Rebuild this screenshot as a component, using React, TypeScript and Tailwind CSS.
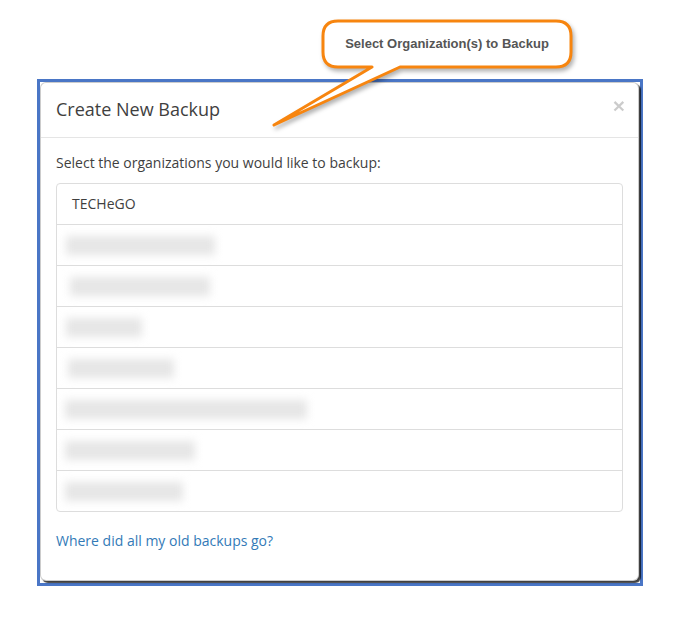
import React from "react";

const blurred = [
  { w: 149, ml: -6 },
  { w: 140, ml: -2 },
  { w: 76, ml: -6 },
  { w: 106, ml: -4 },
  { w: 242, ml: -7 },
  { w: 130, ml: -7 },
  { w: 118, ml: -7 },
];

export default function App() {
  return (
    <div className="relative w-[687px] h-[627px] bg-white overflow-hidden" style={{ fontFamily: '"Open Sans", "Liberation Sans", sans-serif' }}>
      <div className="pt-[79px] pl-[37px]">
        <div className="w-[606px] h-[507px] border-[3px] border-[#4a76c6] bg-white">
          <div className="w-[599px] h-[499px] bg-white rounded-[6px] border border-black/20 shadow-[2px_2px_1px_rgba(0,0,0,0.75)] flex flex-col">
            <div className="px-[15px] pt-[13px] pb-[15px] border-b border-[#e5e5e5] flex items-start justify-between">
              <h4 className="text-[18px] leading-[26px] text-[#3f3f3f]">Create New Backup</h4>
              <span className="text-[21px] leading-[21px] font-bold text-black opacity-20 mt-[-1px] mr-[-2px]" style={{ fontFamily: '"Liberation Sans", sans-serif' }}>×</span>
            </div>
            <div className="p-[15px] text-[14px] leading-[20px] text-[#3f3f3f]">
              <p className="mb-[10px]">Select the organizations you would like to backup:</p>
              <div className="flex flex-col">
                <div className="px-[15px] py-[10px] border border-[#ddd] rounded-t-[4px] mb-[-1px]">TECHeGO</div>
                {blurred.map((b, i) => (
                  <div
                    key={i}
                    className={
                      "px-[15px] py-[10px] border border-[#ddd] mb-[-1px] h-[42px] flex items-center " +
                      (i === blurred.length - 1 ? "rounded-b-[4px]" : "")
                    }
                  >
                    <div
                      className="h-[19px] bg-[#e6e6e6] blur-[4px]"
                      style={{ width: b.w, marginLeft: b.ml }}
                    />
                  </div>
                ))}
              </div>
              <p className="mt-[20px] text-[#337ab7]">Where did all my old backups go?</p>
            </div>
          </div>
        </div>
      </div>

      <svg
        className="absolute left-0 top-0 drop-shadow-[2px_3px_2px_rgba(0,0,0,0.3)]"
        width="687"
        height="140"
        viewBox="0 0 687 140"
      >
        <path
          d="M 338 21 H 556 Q 571 21 571 36 V 52 Q 571 67 556 67 H 400 L 274 125 L 372 67 H 338 Q 323 67 323 52 V 36 Q 323 21 338 21 Z"
          fill="#ffffff"
          stroke="#f7850f"
          strokeWidth="3"
          strokeLinejoin="round"
        />
      </svg>
      <div
        className="absolute left-[323px] top-[21px] w-[248px] h-[46px] flex items-center justify-center text-[13px] font-bold text-[#555]"
        style={{ fontFamily: '"Liberation Sans", Arial, sans-serif' }}
      >
        Select Organization(s) to Backup
      </div>
    </div>
  );
}
